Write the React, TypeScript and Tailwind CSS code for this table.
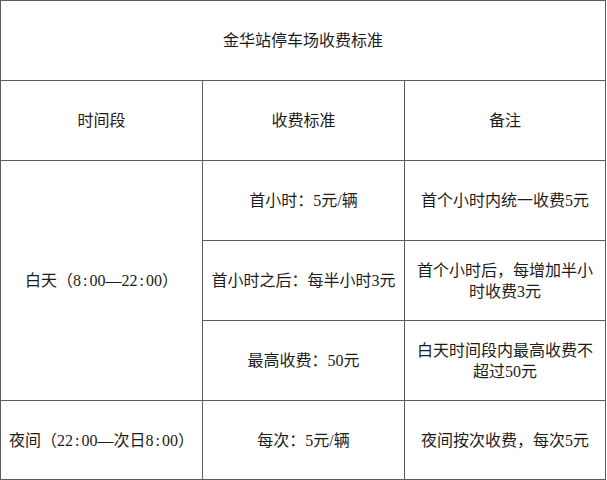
const cell =
  "flex items-center justify-center bg-white px-[9px] text-center text-[16px] leading-[21px] text-[#1c1c1c]";

// SimSun-style wide colon inside times
const Time = ({ t }: { t: string }) => (
  <>
    {t.split(":").map((part, i) => (
      <span key={i}>
        {i > 0 && <span className="px-[2px]">:</span>}
        {part}
      </span>
    ))}
  </>
);

export default function App() {
  return (
    <div className="h-[480px] w-[607px] bg-white font-['Liberation_Serif','Noto_Sans_CJK_SC',serif]">
      <div className="grid w-[606px] grid-cols-[201px_201px_200px] grid-rows-[79px_79px_79px_79px_79px_78px] gap-px bg-[#5a5a5a] p-px">
        <div className={`${cell} col-span-3`}>金华站停车场收费标准</div>

        <div className={cell}>时间段</div>
        <div className={cell}>收费标准</div>
        <div className={cell}>备注</div>

        <div className={`${cell} row-span-3`}>
          <span>
            白天（<Time t="8:00" />—<Time t="22:00" />）
          </span>
        </div>
        <div className={cell}>首小时：5元/辆</div>
        <div className={cell}>首个小时内统一收费5元</div>

        <div className={`${cell} whitespace-nowrap px-0`}>首小时之后：每半小时3元</div>
        <div className={cell}>首个小时后，每增加半小时收费3元</div>

        <div className={cell}>最高收费：50元</div>
        <div className={cell}>白天时间段内最高收费不超过50元</div>

        <div className={`${cell} whitespace-nowrap px-0`}>
          <span>
            夜间（<Time t="22:00" />—次日<Time t="8:00" />）
          </span>
        </div>
        <div className={cell}>每次：5元/辆</div>
        <div className={cell}>夜间按次收费，每次5元</div>
      </div>
    </div>
  );
}
